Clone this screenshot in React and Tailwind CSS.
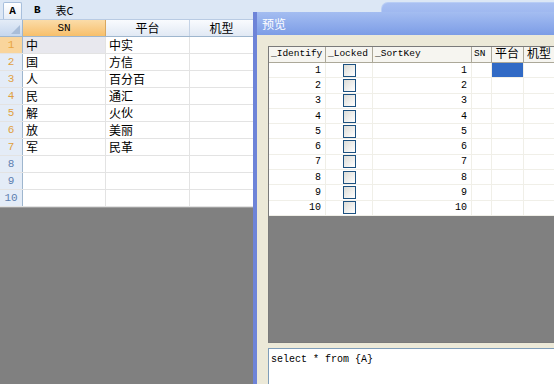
import React from 'react'

const leftRows = [
  ['中', '中实'],
  ['国', '方信'],
  ['人', '百分百'],
  ['民', '通汇'],
  ['解', '火伙'],
  ['放', '美丽'],
  ['军', '民革'],
  ['', ''],
  ['', ''],
  ['', ''],
]

const mono = { fontFamily: '"Liberation Mono", "Noto Sans CJK SC", monospace' }

const Checkbox = () => (
  <div className="w-[13px] h-[13px] border border-[#1c5180] bg-gradient-to-br from-[#dcdcd7] to-white" />
)

const SheetGrid = () => (
  <div className="w-[253px] bg-white text-[12px] text-black border-b border-[#a0a0a0]">
    <div className="flex h-[17px] border-b border-[#9eb6ce]">
      <div className="w-[23px] relative bg-gradient-to-b from-[#e4ecf7] to-[#c6d7ee] border-r border-[#9eb6ce]">
        <div className="absolute right-[2px] bottom-[2px] w-0 h-0 border-l-[9px] border-l-transparent border-b-[9px] border-b-[#a9bdd8]" />
      </div>
      <div className="w-[83px] flex items-center justify-center bg-gradient-to-b from-[#fbdca8] to-[#f7bf6a] border-r border-[#d9a860] text-[11px]" style={mono}>SN</div>
      <div className="w-[84px] flex items-center justify-center bg-gradient-to-b from-[#f9fbfe] to-[#e1e9f4] border-r border-[#c5d3e6]">平台</div>
      <div className="flex-1 flex items-center justify-center bg-gradient-to-b from-[#f9fbfe] to-[#e1e9f4]">机型</div>
    </div>
    {leftRows.map((r, i) => (
      <div key={i} className="flex h-[17px] border-b border-[#e3e3e3]">
        <div
          className={
            'w-[23px] flex items-center justify-center text-[11px] border-r border-[#9eb6ce] ' +
            (i === 0 ? 'bg-[#f9d59c] text-[#e8a440]' : 'bg-[#e4ecf7] ') +
            (i > 0 && i < 7 ? 'text-[#e0a040]' : i >= 7 ? 'text-[#5d7fb0]' : '')
          }
          style={mono}
        >
          {i + 1}
        </div>
        <div className={'w-[83px] flex items-center pl-[3px] border-r border-[#e3e3e3] ' + (i === 0 ? 'bg-[#e8e8ee]' : '')}>{r[0]}</div>
        <div className="w-[84px] flex items-center pl-[3px] border-r border-[#e3e3e3]">{r[1]}</div>
        <div className="flex-1" />
      </div>
    ))}
  </div>
)

const PreviewGrid = () => {
  const rows = Array.from({ length: 10 }, (_, i) => i + 1)
  return (
    <div className="h-[297px] border border-[#7a7a7a] bg-[#808080] flex flex-col text-[9.5px] text-black" style={mono}>
      <div className="flex h-[16px] bg-[#f6f5f0] border-b border-[#aca899]">
        <div className="w-[57px] pl-[2px] flex items-center border-r border-[#aca899]">_Identify</div>
        <div className="w-[47px] pl-[2px] flex items-center border-r border-[#aca899]">_Locked</div>
        <div className="w-[99px] pl-[2px] flex items-center border-r border-[#aca899]">_SortKey</div>
        <div className="w-[20px] pl-[2px] flex items-center border-r border-[#aca899]">SN</div>
        <div className="w-[32px] pl-[3px] flex items-center border-r border-[#aca899] text-[12px]">平台</div>
        <div className="flex-1 pl-[3px] flex items-center text-[12px]">机型</div>
      </div>
      {rows.map((n) => (
        <div key={n} className="flex h-[15.3px] bg-white border-b border-[#f0efe8] text-[10px]">
          <div className="w-[57px] pr-[4px] flex items-center justify-end border-r border-[#f0efe8]">{n}</div>
          <div className="w-[47px] flex items-center justify-center border-r border-[#f0efe8]">
            <Checkbox />
          </div>
          <div className="w-[99px] pr-[4px] flex items-center justify-end border-r border-[#f0efe8]">{n}</div>
          <div className="w-[20px] border-r border-[#f0efe8]" />
          <div className={'w-[32px] border-r border-[#f0efe8] ' + (n === 1 ? 'bg-[#316ac5]' : '')} />
          <div className="flex-1" />
        </div>
      ))}
      <div className="flex-1 bg-[#808080]" />
    </div>
  )
}

export default function App() {
  return (
    <div className="relative w-[554px] h-[384px] overflow-hidden bg-[#808080]" style={{ fontFamily: '"Noto Sans CJK SC", "Liberation Sans", sans-serif' }}>
      <div className="flex flex-col h-full">
        <div className="h-[20px] bg-[#dce7f5] border-b border-[#b9cbe3] flex items-end text-[11px] text-black">
          <div className="ml-[3px] w-[19px] h-[17px] flex items-center justify-center bg-gradient-to-b from-white to-[#e6edf7] border border-b-0 border-[#a8bfdc] rounded-t-[2px] font-bold" style={mono}>A</div>
          <div className="ml-[12px] h-[17px] flex items-center font-bold" style={mono}>B</div>
          <div className="ml-[15px] h-[17px] flex items-center">表C</div>
        </div>
        <SheetGrid />
        <div className="flex-1 bg-[#808080]" />
      </div>

      {/* window behind the preview */}
      <div className="absolute left-[381px] top-[2px] w-[190px] h-[40px] rounded-tl-[7px] border-t border-l border-[#b8cdf5] bg-gradient-to-b from-[#a9c0f2] to-[#7f9fe8]" />

      {/* preview dialog */}
      <div className="absolute left-[253px] top-[12px] w-[310px] h-[380px] flex flex-col border-l-4 border-[#6e84d8]">
        <div className="h-[23px] flex items-center pl-[5px] bg-gradient-to-b from-[#a4bdf1] to-[#7d9de6] text-white text-[12px]">预览</div>
        <div className="flex-1 bg-[#ece9d8] pl-[11px] pt-[11px] flex flex-col">
          <PreviewGrid />
          <div className="mt-[5px] flex-1 bg-white border-t border-l border-[#7f9db9] pl-[2px] pt-[3px] text-[10px] text-black" style={mono}>
            select * from {'{A}'}
          </div>
        </div>
      </div>
    </div>
  )
}
